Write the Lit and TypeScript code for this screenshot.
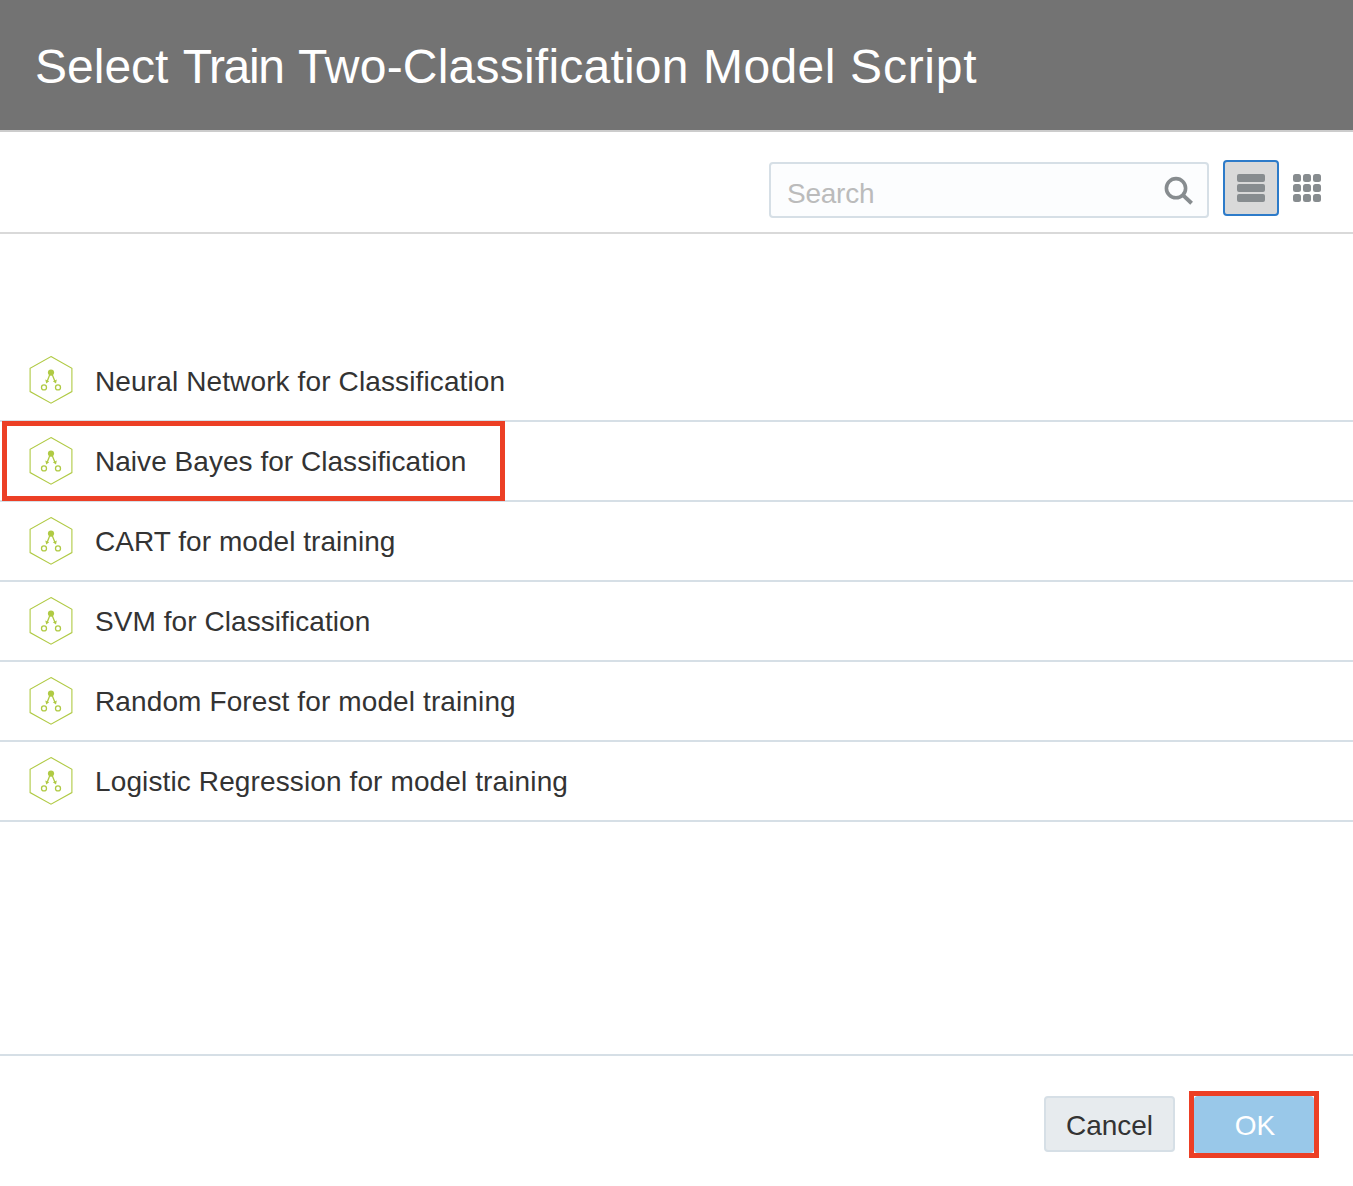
import { LitElement, html, css, svg } from "lit";
import { customElement } from "lit/decorators.js";
import { classMap } from "lit/directives/class-map.js";

interface Script {
  name: string;
  tracking: string;
  marked?: boolean;
}

const SCRIPTS: Script[] = [
  { name: "Neural Network for Classification", tracking: "0.125px" },
  { name: "Naive Bayes for Classification", tracking: "0.035px", marked: true },
  { name: "CART for model training", tracking: "0.05px" },
  { name: "SVM for Classification", tracking: "0.07px" },
  { name: "Random Forest for model training", tracking: "0.115px" },
  { name: "Logistic Regression for model training", tracking: "0.12px" },
];

const TITLE: [string, string][] = [
  ["Select", "0px"],
  ["Train", "-1.35px"],
  ["Two-Classification", "0.22px"],
  ["Model", "0.4px"],
  ["Script", "0.75px"],
];

@customElement("script-icon")
export class ScriptIcon extends LitElement {
  static styles = css`
    :host { display: block; width: 44px; height: 48px; }
    .icon { display: block; }
  `;
  render() {
    return html`<svg class="icon" width="44" height="48" viewBox="0 0 44 48" fill="none" stroke="#b0ca44">
      <path d="M22 .6 42.9 12.2V35.6L22 47.2 1.1 35.6V12.2Z" stroke-width="1.1" />
      <circle cx="22" cy="16.6" r="3.1" fill="#b0ca44" stroke="none" />
      <path d="M21 18 18.3 25M23 18 25.8 25" stroke-width="1.3" />
      <path d="M16.3 23.4 20.2 25.2 17.2 27.6ZM27.8 23.4 23.9 25.2 27 27.6Z" fill="#b0ca44" stroke="none" />
      <circle cx="15" cy="31.4" r="2.5" stroke-width="1.3" />
      <circle cx="29" cy="31.4" r="2.5" stroke-width="1.3" />
    </svg>`;
  }
}

@customElement("app-root")
export class AppRoot extends LitElement {
  static styles = css`
    :host {
      display: flex;
      flex-direction: column;
      height: 1186px;
      background: #fff;
      color: #333;
      font: 28px/32px "Liberation Sans", Arial, sans-serif;
      overflow: hidden;
    }
    *, *::after { box-sizing: border-box; }
    .header {
      height: 132px;
      padding: 39px 35px 0;
      background: #737373;
      border-bottom: 2px solid #ccc;
    }
    .title {
      margin: 0;
      color: #fff;
      font-size: 48px;
      line-height: 56px;
      font-weight: 400;
      white-space: nowrap;
      word-spacing: 1px;
    }
    .toolbar {
      height: 102px;
      padding: 28px 18px 0 0;
      display: flex;
      justify-content: flex-end;
      align-items: flex-start;
      border-bottom: 2px solid #d9d9d9;
    }
    .search {
      display: flex;
      justify-content: space-between;
      width: 440px;
      height: 56px;
      margin: 2px 14px 0 0;
      padding: 14px 13px 0 16px;
      border: 2px solid #d6dfe6;
      border-radius: 4px;
      background: #fcfdfe;
      color: #bbb;
    }
    .hint { letter-spacing: -0.25px; }
    .glass { display: block; margin-top: -2px; }
    .view {
      width: 56px;
      height: 56px;
      padding: 12px;
      border: 2px solid transparent;
      border-radius: 4px;
    }
    .view.on { background: #d9d9d9; border-color: #2d7bc9; }
    .view svg { display: block; }
    .list {
      flex: 1;
      margin: 0;
      padding: 108px 0 0;
      list-style: none;
    }
    .row {
      position: relative;
      display: flex;
      height: 80px;
      padding: 15px 0 0 29px;
      border-bottom: 2px solid #d6dfe6;
    }
    .row:first-child { padding-top: 14px; }
    .name { margin: 9px 0 0 22px; white-space: nowrap; }
    .row:first-child .name { margin-top: 10px; }
    .marked::after {
      content: "";
      position: absolute;
      left: 2px;
      top: -1px;
      width: 503px;
      height: 80px;
      border: 5px solid #ec3f25;
    }
    .footer {
      display: flex;
      justify-content: flex-end;
      height: 132px;
      padding: 35px 34px 0 0;
      border-top: 2px solid #d6dfe6;
    }
    .button {
      height: 56px;
      padding: 0;
      font: inherit;
      border-radius: 4px;
    }
    .cancel {
      width: 131px;
      margin: 5px 14px 0 0;
      padding-top: 3px;
      color: #333;
      background: #e7ebee;
      border: 2px solid #d6dfe6;
    }
    .frame {
      width: 130px;
      height: 67px;
      border: 5px solid #ec3f25;
    }
    .ok {
      display: block;
      width: 120px;
      height: 57px;
      padding: 2px 0 0 2px;
      color: #fff;
      background: #99c8e9;
      border: 0;
    }
  `;

  render() {
    return html`
      <header class="header">
        <h1 class="title">${TITLE.map(([word, tracking], i) => html`${i ? " " : ""}<span style="letter-spacing:${tracking}">${word}</span>`)}</h1>
      </header>
      <div class="toolbar">
        <div class="search">
          <span class="hint">Search</span>
          <svg class="glass" width="30" height="30" viewBox="0 0 30 30" fill="none" stroke="#878c8f">
            <circle cx="12" cy="12.2" r="9.6" stroke-width="3.6" />
            <path d="M18.7 18.9 27.6 27.2" stroke-width="4" />
          </svg>
        </div>
        <div class="view on">
          <svg width="28" height="28" fill="#878c8f">
            ${[0, 10, 20].map((y) => svg`<rect y=${y} width="28" height="8" rx="2" />`)}
          </svg>
        </div>
        <div class="view">
          <svg width="28" height="28" fill="#878c8f">
            ${[0, 10, 20].map((y) => [0, 10, 20].map((x) => svg`<rect x=${x} y=${y} width="8" height="8" rx="2.5" />`))}
          </svg>
        </div>
      </div>
      <ul class="list">
        ${SCRIPTS.map((s) => html`
          <li class=${classMap({ row: true, marked: !!s.marked })}>
            <script-icon></script-icon>
            <span class="name" style="letter-spacing:${s.tracking}">${s.name}</span>
          </li>`)}
      </ul>
      <footer class="footer">
        <button class="button cancel">Cancel</button>
        <div class="frame"><button class="button ok">OK</button></div>
      </footer>
    `;
  }
}
